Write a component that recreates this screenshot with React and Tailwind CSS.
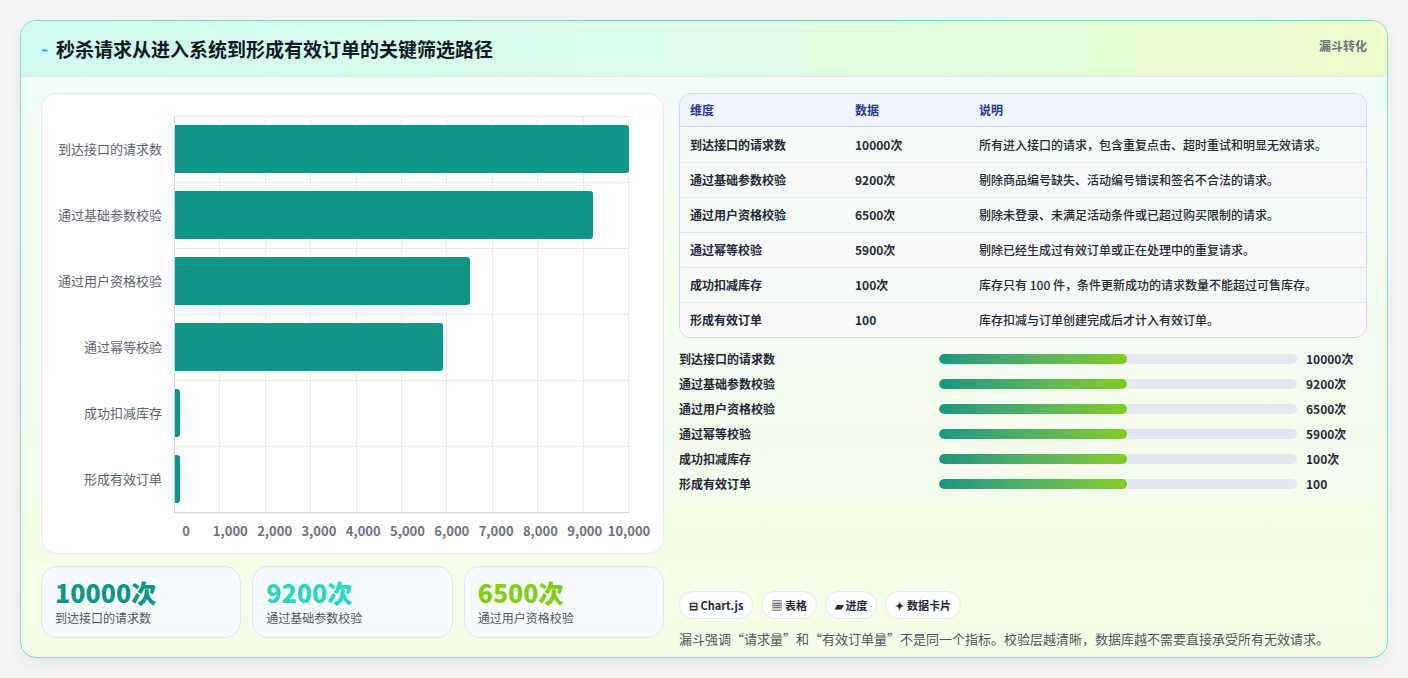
import React from 'react';

const rows = [
  { name: '到达接口的请求数', v: 10000, d: '10000次', desc: '所有进入接口的请求，包含重复点击、超时重试和明显无效请求。' },
  { name: '通过基础参数校验', v: 9200, d: '9200次', desc: '剔除商品编号缺失、活动编号错误和签名不合法的请求。' },
  { name: '通过用户资格校验', v: 6500, d: '6500次', desc: '剔除未登录、未满足活动条件或已超过购买限制的请求。' },
  { name: '通过幂等校验', v: 5900, d: '5900次', desc: '剔除已经生成过有效订单或正在处理中的重复请求。' },
  { name: '成功扣减库存', v: 100, d: '100次', desc: '库存只有 100 件，条件更新成功的请求数量不能超过可售库存。' },
  { name: '形成有效订单', v: 100, d: '100', desc: '库存扣减与订单创建完成后才计入有效订单。' },
];

const ticks = ['0', '1,000', '2,000', '3,000', '4,000', '5,000', '6,000', '7,000', '8,000', '9,000', '10,000'];

const font = { fontFamily: '"Noto Sans CJK SC", "Noto Sans", sans-serif' };

function Chart() {
  return (
    <div className="bg-white rounded-2xl border border-[#e2ece8] h-[461px] pt-[22px] pl-[14px] pr-[34px]">
      <div className="flex">
        <div className="w-[118px] flex flex-col pr-[12px]">
          {rows.map((r) => (
            <div key={r.name} className="h-[66px] flex items-center justify-end text-[13px] text-[#5b6472]">{r.name}</div>
          ))}
        </div>
        <div className="flex-1 relative border-l border-b border-[#cfd4dc]">
          <div className="absolute inset-0 flex">
            {ticks.slice(1).map((t) => (
              <div key={t} className="flex-1 border-r border-[#e8ebef]" />
            ))}
          </div>
          <div className="absolute inset-0 flex flex-col">
            {rows.map((r) => (
              <div key={r.name} className="flex-1 border-t border-[#e8ebef]" />
            ))}
          </div>
          <div className="relative flex flex-col">
            {rows.map((r) => (
              <div key={r.name} className="h-[66px] flex items-center">
                <div className="h-[48px] bg-[#0f9488] rounded-r-[3px]" style={{ width: `${(r.v / 10000) * 100}%` }} />
              </div>
            ))}
          </div>
        </div>
      </div>
      <div className="flex ml-[130px] mt-[8px] relative h-[20px]">
        {ticks.map((t, i) => (
          <div key={t} className="absolute -translate-x-1/2 text-[13px] text-[#6b7280] font-semibold" style={{ left: `${i * 10}%` }}>{t}</div>
        ))}
      </div>
    </div>
  );
}

function Stat({ value, label, color }) {
  return (
    <div className="flex-1 h-[72px] rounded-2xl border border-[#dbeae6] bg-[#f8fbfd] px-[13px] pt-[10px]">
      <div className={`text-[25px] leading-[30px] font-extrabold ${color}`}>{value}</div>
      <div className="text-[12px] text-[#4b5563] mt-[2px]">{label}</div>
    </div>
  );
}

export default function App() {
  return (
    <div className="bg-[#f3f4f6] min-h-[678px] p-[20px]" style={font}>
      <div className="rounded-2xl border border-[#7edcc9] overflow-hidden bg-gradient-to-b from-[#f0fdf9] to-[#f6fde6] shadow-[0_6px_16px_rgba(0,0,0,0.06)] h-[638px]">
        <div className="h-[56px] flex items-start justify-between px-[20px] pt-[14px] bg-gradient-to-r from-[#cffaf0] via-[#dcfce7] to-[#ecfccb] border-b border-[#dbeee4]">
          <div className="flex items-center gap-[8px]">
            <span className="text-[#3b82f6] text-[12px]">⌁</span>
            <span className="text-[19px] font-bold text-[#111827]">秒杀请求从进入系统到形成有效订单的关键筛选路径</span>
          </div>
          <span className="text-[12px] font-semibold text-[#6b7280] mt-[2px]">漏斗转化</span>
        </div>
        <div className="flex gap-[15px] px-[20px] pt-[16px]">
          <div className="w-[623px] flex flex-col gap-[12px]">
            <Chart />
            <div className="flex gap-[11px]">
              <Stat value="10000次" label="到达接口的请求数" color="text-[#0f9488]" />
              <Stat value="9200次" label="通过基础参数校验" color="text-[#2dd4bf]" />
              <Stat value="6500次" label="通过用户资格校验" color="text-[#84cc16]" />
            </div>
          </div>
          <div className="flex-1 flex flex-col">
            <div className="rounded-xl border border-[#cfd8e3] overflow-hidden bg-white">
              <div className="flex h-[33px] items-center bg-[#eef5fd] border-b border-[#cfd8e3] text-[12px] font-semibold text-[#1e3a8a] px-[10px]">
                <div className="w-[165px]">维度</div>
                <div className="w-[124px]">数据</div>
                <div>说明</div>
              </div>
              {rows.map((r, i) => (
                <div key={r.name} className={`flex h-[35px] items-center text-[12px] font-semibold text-[#1f2937] px-[10px] ${i > 0 ? 'border-t border-[#e5e9ef]' : ''} ${i % 2 === 0 ? 'bg-[#f3fcf6]' : 'bg-[#f8fafc]'}`}>
                  <div className="w-[165px]">{r.name}</div>
                  <div className="w-[124px]">{r.d}</div>
                  <div className="font-medium">{r.desc}</div>
                </div>
              ))}
            </div>
            <div className="flex flex-col mt-[8px]">
              {rows.map((r) => (
                <div key={r.name} className="h-[25px] flex items-center text-[12px] font-semibold text-[#1f2937]">
                  <div className="w-[260px]">{r.name}</div>
                  <div className="w-[358px] h-[10px] rounded-full bg-[#e2e8f0] overflow-hidden">
                    <div className="h-full w-[52.5%] rounded-full bg-gradient-to-r from-[#14967f] to-[#84cc16]" />
                  </div>
                  <div className="ml-[9px]">{r.d}</div>
                </div>
              ))}
            </div>
            <div className="flex gap-[8px] mt-[95px]">
              {['⊟ Chart.js', '▦ 表格', '▰ 进度', '✦ 数据卡片'].map((c) => (
                <div key={c} className="h-[28px] px-[9px] flex items-center rounded-full bg-white border border-[#e5e7eb] text-[11px] font-semibold text-[#1f2937]">{c}</div>
              ))}
            </div>
            <div className="mt-[10px] text-[13px] text-[#4b5563]">漏斗强调“请求量”和“有效订单量”不是同一个指标。校验层越清晰，数据库越不需要直接承受所有无效请求。</div>
          </div>
        </div>
      </div>
    </div>
  );
}
